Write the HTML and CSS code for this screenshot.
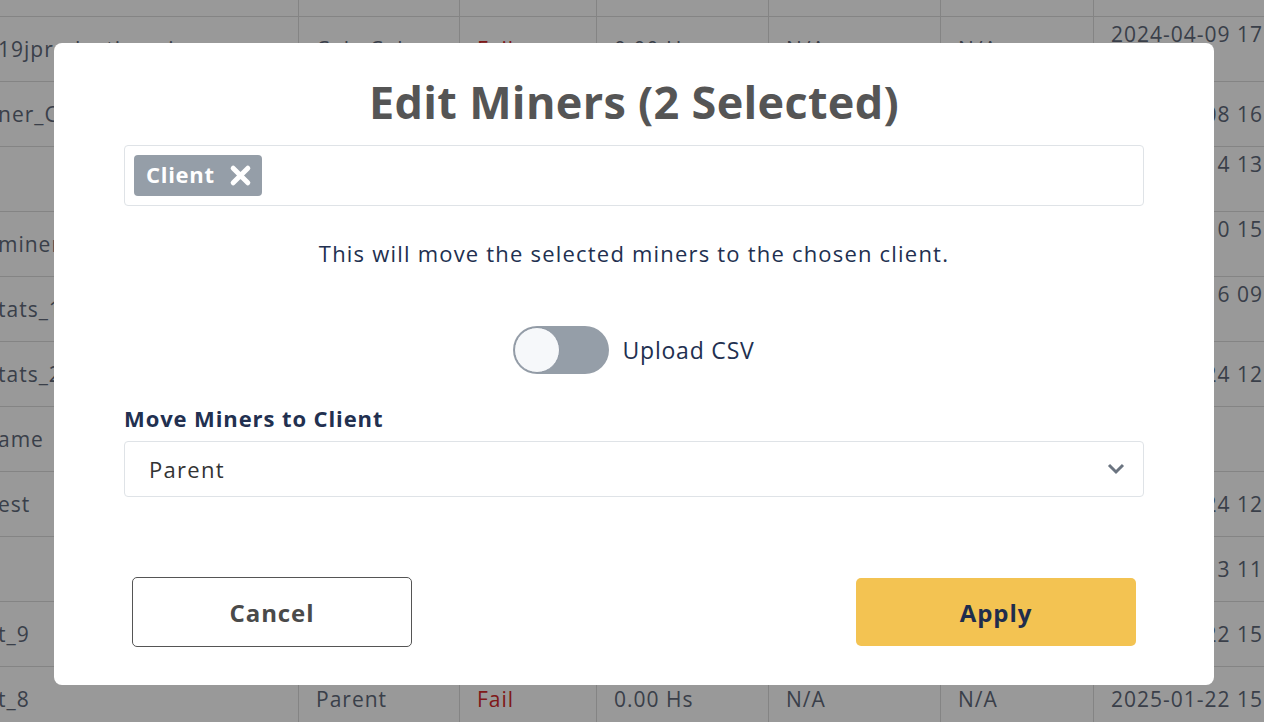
FILE: index.html
```html
<!DOCTYPE html>
<html lang="en">
<head>
<meta charset="utf-8">
<title>Edit Miners</title>
<link rel="stylesheet" href="styles.css">
</head>
<body>
<div class="table">
  <div class="row head"><div class="cell"></div><div class="cell"></div><div class="cell"></div><div class="cell"></div><div class="cell"></div><div class="cell"></div><div class="cell"></div></div>
  <div class="row"><div class="cell">19jproduction_rig</div><div class="cell">Cole Cole</div><div class="cell fail">Fail</div><div class="cell">0.00 Hs</div><div class="cell">N/A</div><div class="cell">N/A</div><div class="cell top">2024-04-09 17:<br>42:10</div></div>
  <div class="row"><div class="cell">ner_Cole_01</div><div class="cell">Cole Cole</div><div class="cell fail">Fail</div><div class="cell">0.00 Hs</div><div class="cell">N/A</div><div class="cell">N/A</div><div class="cell">2024-04-08 16:</div></div>
  <div class="row"><div class="cell"></div><div class="cell">Parent</div><div class="cell fail">Fail</div><div class="cell">0.00 Hs</div><div class="cell">N/A</div><div class="cell">N/A</div><div class="cell top">2024-04-14 13:<br>05:44</div></div>
  <div class="row"><div class="cell">miner_x</div><div class="cell">Parent</div><div class="cell fail">Fail</div><div class="cell">0.00 Hs</div><div class="cell">N/A</div><div class="cell">N/A</div><div class="cell top">2024-04-10 15:<br>22:31</div></div>
  <div class="row"><div class="cell">tats_1</div><div class="cell">Parent</div><div class="cell fail">Fail</div><div class="cell">0.00 Hs</div><div class="cell">N/A</div><div class="cell">N/A</div><div class="cell top">2024-04-16 09:<br>10:02</div></div>
  <div class="row"><div class="cell">tats_2</div><div class="cell">Parent</div><div class="cell fail">Fail</div><div class="cell">0.00 Hs</div><div class="cell">N/A</div><div class="cell">N/A</div><div class="cell">2024-04-24 12:</div></div>
  <div class="row"><div class="cell">ame</div><div class="cell">Parent</div><div class="cell fail">Fail</div><div class="cell">0.00 Hs</div><div class="cell">N/A</div><div class="cell">N/A</div><div class="cell"></div></div>
  <div class="row"><div class="cell">est</div><div class="cell">Parent</div><div class="cell fail">Fail</div><div class="cell">0.00 Hs</div><div class="cell">N/A</div><div class="cell">N/A</div><div class="cell">2024-04-24 12:</div></div>
  <div class="row"><div class="cell"></div><div class="cell">Parent</div><div class="cell fail">Fail</div><div class="cell">0.00 Hs</div><div class="cell">N/A</div><div class="cell">N/A</div><div class="cell">2024-05-13 11:</div></div>
  <div class="row"><div class="cell">t_9</div><div class="cell">Parent</div><div class="cell fail">Fail</div><div class="cell">0.00 Hs</div><div class="cell">N/A</div><div class="cell">N/A</div><div class="cell">2025-01-22 15:</div></div>
  <div class="row"><div class="cell">t_8</div><div class="cell">Parent</div><div class="cell fail">Fail</div><div class="cell">0.00 Hs</div><div class="cell">N/A</div><div class="cell">N/A</div><div class="cell">2025-01-22 15:</div></div>
</div>

<div class="overlay">
  <div class="modal">
    <h1 class="title">Edit Miners (2 Selected)</h1>
    <div class="tag-box">
      <span class="chip"><span class="chip-text">Client</span>
        <svg class="chip-x" viewBox="0 0 22 22" width="23" height="23"><path d="M4 4 L18 18 M18 4 L4 18" stroke="#fff" stroke-width="4.8" stroke-linecap="round"/></svg>
      </span>
    </div>
    <p class="desc">This will move the selected miners to the chosen client.</p>
    <div class="toggle-row">
      <span class="toggle"><span class="knob"></span></span>
      <span class="toggle-label">Upload CSV</span>
    </div>
    <label class="field-label">Move Miners to Client</label>
    <div class="select">
      <span>Parent</span>
      <svg class="chev" viewBox="0 0 18 12" width="18" height="12"><path d="M2 2 L9 9 L16 2" fill="none" stroke="#6b7480" stroke-width="3"/></svg>
    </div>
    <div class="actions">
      <button class="btn btn-cancel">Cancel</button>
      <button class="btn btn-apply">Apply</button>
    </div>
  </div>
</div>
</body>
</html>
```

FILE: styles.css
```css
html, body {
  margin: 0;
  padding: 0;
  width: 1264px;
  height: 722px;
  overflow: hidden;
  background: #fff;
  font-family: "Open Sans", "Noto Sans", sans-serif;
}

.table {
  width: 1264px;
  overflow: hidden;
  font-size: 21px;
  letter-spacing: 1px;
  color: #616a7b;
}
.row {
  display: grid;
  grid-template-columns: 300px 161px 137px 172px 172px 153px 171px;
  height: 65px;
  box-sizing: border-box;
  border-top: 1px solid #dcdcdc;
  margin-left: -2px;
}
.row.head { height: 16px; border-top: none; }
.cell {
  border-left: 1px solid #dcdcdc;
  padding-left: 17px;
  display: flex;
  align-items: center;
  white-space: nowrap;
  overflow: hidden;
  line-height: 26px;
}
.cell:first-child { border-left: none; padding-left: 0; }
.cell.top { align-items: flex-start; padding-top: 4px; }
.cell.fail { color: #d42a2a; }

.overlay {
  position: fixed;
  inset: 0;
  background: rgba(0, 0, 0, 0.4);
  padding-top: 43px;
  box-sizing: border-box;
}

.modal {
  margin-left: 54px;
  width: 1160px;
  height: 642px;
  box-sizing: border-box;
  background: #fff;
  border-radius: 8px;
  padding: 28px 70px 0;
  display: flex;
  flex-direction: column;
}

.title {
  margin: 0;
  text-align: center;
  font-size: 45px;
  letter-spacing: 0.3px;
  font-weight: 700;
  color: #555555;
  line-height: 62px;
}

.tag-box {
  margin-top: 12px;
  height: 61px;
  box-sizing: border-box;
  border: 1px solid #dfe3e7;
  border-radius: 4px;
  padding: 9px;
  display: flex;
  align-items: center;
}

.chip {
  display: inline-flex;
  align-items: center;
  gap: 14px;
  height: 41px;
  box-sizing: border-box;
  padding: 0 10px 0 12px;
  background: #959ea8;
  border-radius: 4px;
  color: #fff;
  font-weight: 700;
  font-size: 22px;
  letter-spacing: 0.7px;
}
.chip-text { line-height: 26px; margin-top: -3px; }
.chip-x { display: block; }

.desc {
  margin: 33px 0 0;
  text-align: center;
  font-size: 22px;
  letter-spacing: 1.2px;
  line-height: 28px;
  color: #223050;
}

.toggle-row {
  margin-top: 59px;
  display: flex;
  justify-content: center;
  align-items: center;
  gap: 13px;
}
.toggle {
  width: 96px;
  height: 48px;
  border-radius: 24px;
  background: #959ea8;
  display: flex;
  align-items: center;
  padding: 1px;
  box-sizing: border-box;
}
.knob {
  width: 46px;
  height: 46px;
  border-radius: 50%;
  background: #f6f8fa;
  box-sizing: border-box;
  border: 1px solid #8d96a2;
}
.toggle-label {
  font-size: 23px;
  letter-spacing: 0.8px;
  color: #223050;
}

.field-label {
  margin-top: 29px;
  font-size: 22px;
  letter-spacing: 0.9px;
  font-weight: 700;
  color: #223050;
  line-height: 30px;
}

.select {
  margin-top: 8px;
  height: 56px;
  box-sizing: border-box;
  border: 1px solid #dfe3e7;
  border-radius: 4px;
  padding: 0 18px 0 24px;
  display: flex;
  align-items: center;
  justify-content: space-between;
  font-size: 22px;
  letter-spacing: 1.3px;
  color: #333;
}
.chev { display: block; }

.actions {
  margin-top: 80px;
  padding: 0 8px;
  display: flex;
  justify-content: space-between;
  align-items: center;
}

.btn {
  width: 280px;
  font-family: inherit;
  font-size: 24px;
  font-weight: 700;
  letter-spacing: 0.9px;
  border-radius: 5px;
  cursor: pointer;
}
.btn-cancel {
  height: 70px;
  background: #fff;
  border: 1px solid #555;
  color: #4a4a4a;
}
.btn-apply {
  height: 68px;
  background: #f3c352;
  border: none;
  color: #1f2d4d;
}
```
